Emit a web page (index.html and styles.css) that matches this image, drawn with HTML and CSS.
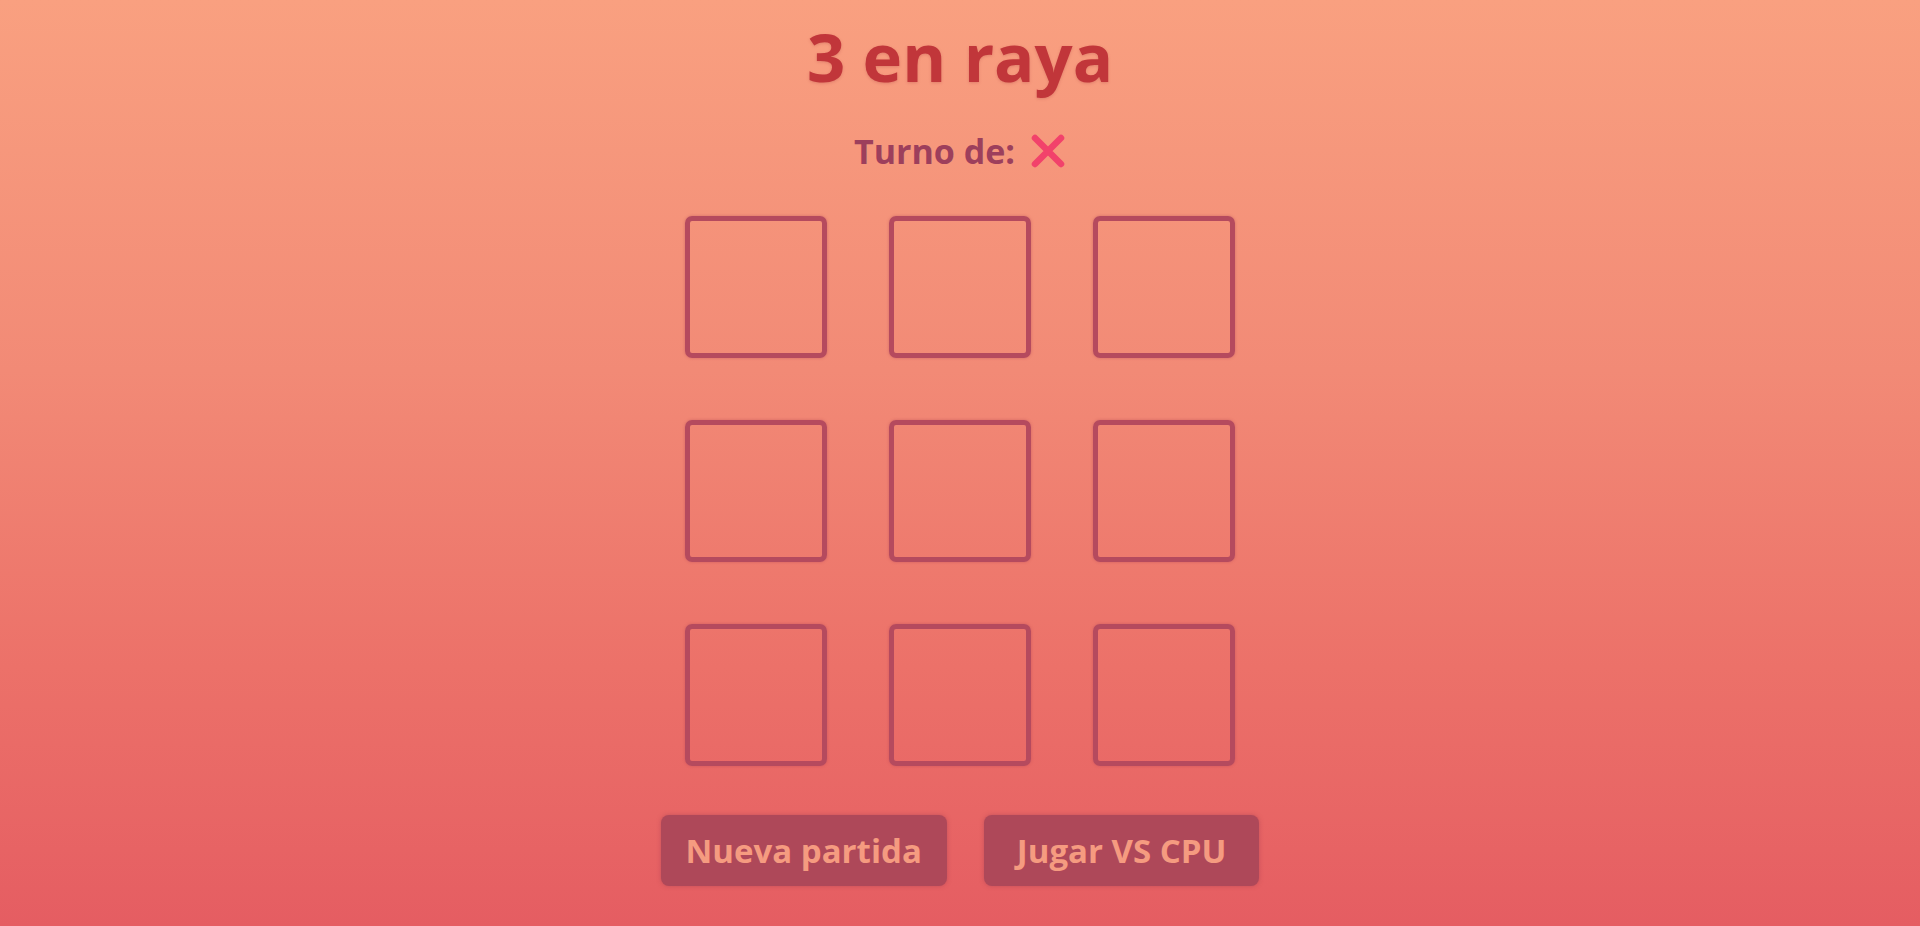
FILE: index.html
```html
<!DOCTYPE html>
<html lang="es">
<head>
<meta charset="utf-8">
<title>3 en raya</title>
<link rel="stylesheet" href="styles.css">
</head>
<body>
<main class="app">
  <h1 class="title">3 en raya</h1>
  <div class="turn">
    <span class="turn-label">Turno de:</span>
    <svg class="turn-icon" width="36" height="36" viewBox="0 0 36 36" aria-hidden="true">
      <path d="M5 5 L31 31 M31 5 L5 31" stroke="#f2426b" stroke-width="6.5" stroke-linecap="round" fill="none"/>
    </svg>
  </div>
  <div class="board">
    <button class="cell"></button>
    <button class="cell"></button>
    <button class="cell"></button>
    <button class="cell"></button>
    <button class="cell"></button>
    <button class="cell"></button>
    <button class="cell"></button>
    <button class="cell"></button>
    <button class="cell"></button>
  </div>
  <div class="actions">
    <button class="btn">Nueva partida</button>
    <button class="btn">Jugar VS CPU</button>
  </div>
</main>
</body>
</html>
```
FILE: styles.css
```css
* { box-sizing: border-box; }
html, body { margin: 0; padding: 0; }
body {
  min-height: 100vh;
  background: linear-gradient(180deg, #f9a080 0%, #f28a76 40%, #ec7169 72%, #e55d62 100%);
  font-family: "Open Sans", "Noto Sans", sans-serif;
}
.app {
  display: flex;
  flex-direction: column;
  align-items: center;
  padding-top: 23px;
}
.title {
  margin: 0;
  font-size: 67px;
  font-weight: 700;
  line-height: 1;
  color: #c1363a;
  text-shadow: 0 1px 3px rgba(160, 40, 50, 0.25);
}
.turn {
  display: flex;
  align-items: center;
  gap: 15px;
  margin-top: 43px;
}
.turn-label {
  font-size: 34px;
  font-weight: 700;
  line-height: 1;
  color: #9d3f5c;
}
.turn-icon { display: block; }
.board {
  display: grid;
  grid-template-columns: repeat(3, 142px);
  grid-auto-rows: 142px;
  gap: 62px;
  margin-top: 47px;
}
.cell {
  border: 5px solid #b54a5e;
  border-radius: 7px;
  background: transparent;
  box-shadow: 0 0 3px rgba(170, 60, 80, 0.45);
  padding: 0;
}
.actions {
  display: flex;
  gap: 37px;
  margin-top: 49px;
}
.btn {
  height: 71px;
  padding: 0 25px;
  border: none;
  border-radius: 8px;
  background: #ae4859;
  color: #f59b80;
  font-family: inherit;
  font-size: 33px;
  font-weight: 700;
  box-shadow: 0 0 4px rgba(160, 60, 80, 0.5);
}
.btn + .btn { padding: 0 33px; }
```
